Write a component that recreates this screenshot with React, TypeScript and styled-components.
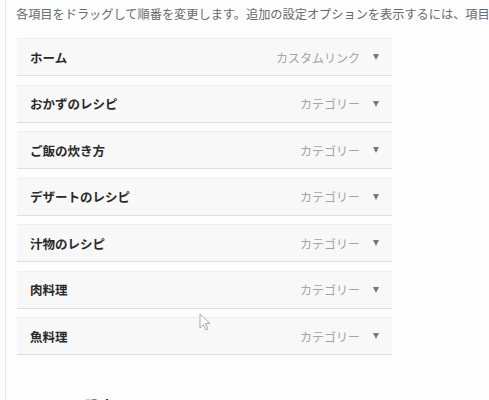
import React from 'react'
import styled, {createGlobalStyle} from 'styled-components'

const GlobalStyle = createGlobalStyle`
  html, body {
    margin: 0;
    padding: 0;
    background: #fdfdfd;
    overflow: hidden;
  }
  body {
    font-family: "Noto Sans CJK JP", "Noto Sans", sans-serif;
  }
`

const Page = styled.div`
  position: relative;
  width: 489px;
  height: 400px;
  overflow: hidden;
  padding-left: 5px;
  box-sizing: border-box;
`

const Frame = styled.div`
  border-left: 1px solid #e6e6e6;
  padding: 4px 0 0 10px;
  height: 100%;
  box-sizing: border-box;
`

const Description = styled.p`
  margin: 0;
  font-size: 12.2px;
  line-height: 20px;
  color: #6a6a6a;
  white-space: nowrap;
`

const MenuList = styled.ul`
  list-style: none;
  margin: 14px 0 0 1px;
  padding: 0;
  width: 375px;
  display: flex;
  flex-direction: column;
  gap: 8.5px;
`

const MenuItem = styled.li`
  height: 38px;
  box-sizing: border-box;
  display: flex;
  align-items: center;
  padding: 0 13px 0 13px;
  background: #f8f8f8;
  border-top: 1px solid #efefef;
  border-bottom: 1px solid #dedede;
`

const Title = styled.span`
  flex: 1;
  font-size: 12.5px;
  font-weight: 700;
  color: #2a2a2a;
`

const ItemType = styled.span`
  font-size: 12px;
  color: #a4a4a4;
  margin-right: 13px;
`

const Arrow = styled.span`
  width: 0;
  height: 0;
  border-left: 3.5px solid transparent;
  border-right: 3.5px solid transparent;
  border-top: 6px solid #777;
`

const Heading = styled.h2`
  margin: 40px 0 0 9px;
  font-size: 14px;
  font-weight: 700;
  color: #222;
  letter-spacing: 1px;
`

const Cursor = styled.svg`
  position: absolute;
  left: 199px;
  top: 313px;
`

const items = [
  {title: 'ホーム', type: 'カスタムリンク'},
  {title: 'おかずのレシピ', type: 'カテゴリー'},
  {title: 'ご飯の炊き方', type: 'カテゴリー'},
  {title: 'デザートのレシピ', type: 'カテゴリー'},
  {title: '汁物のレシピ', type: 'カテゴリー'},
  {title: '肉料理', type: 'カテゴリー'},
  {title: '魚料理', type: 'カテゴリー'},
]

export default function App() {
  return (
    <Page>
      <GlobalStyle />
      <Frame>
        <Description>
          各項目をドラッグして順番を変更します。追加の設定オプションを表示するには、項目の右にある矢印をクリックしてください。
        </Description>
        <MenuList>
          {items.map((item) => (
            <MenuItem key={item.title}>
              <Title>{item.title}</Title>
              <ItemType>{item.type}</ItemType>
              <Arrow />
            </MenuItem>
          ))}
        </MenuList>
        <Heading>メニュー設定</Heading>
      </Frame>
      <Cursor width="14" height="20" viewBox="0 0 14 20">
        <path
          d="M1 1 L1 15 L4.5 11.5 L7 17 L9 16 L6.5 10.5 L11 10.5 Z"
          fill="#fff"
          stroke="#aaa"
          strokeWidth="1"
        />
      </Cursor>
    </Page>
  )
}
